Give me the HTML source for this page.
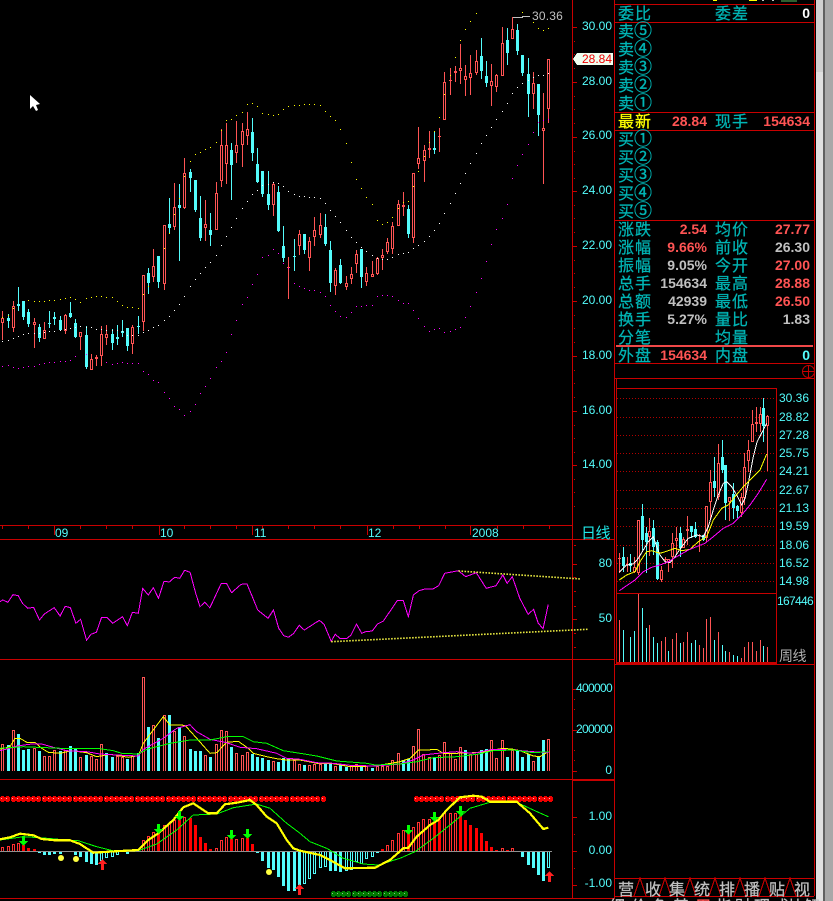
<!DOCTYPE html>
<html><head><meta charset="utf-8">
<style>
html,body{margin:0;padding:0;background:#000;width:833px;height:901px;overflow:hidden}
#w{position:relative;width:833px;height:901px;overflow:hidden;background:#000;font-family:"Liberation Sans","WenQuanYi Zen Hei",sans-serif}
svg{position:absolute;left:0;top:0}
.t{position:absolute;white-space:nowrap;line-height:18px;height:18px}
.cn{font-family:"WenQuanYi Zen Hei","Noto Sans CJK SC",sans-serif;font-size:16px;letter-spacing:1px;color:#00b4b4;margin-top:-1px;-webkit-text-stroke:.25px currentColor}
.cn i{font-style:normal;font-family:"Noto Sans CJK SC",sans-serif;font-size:18px;line-height:18px;letter-spacing:0;margin-left:-1px;-webkit-text-stroke:.35px currentColor}
.l{left:618px}.m{left:715px}
.n{font-size:14px;font-weight:bold;color:#ff5454}
.a{right:126px}.b{right:23px}
.g{color:#c0c0c0}
.x{font-size:12px;color:#54fcfc;right:221px;letter-spacing:0}
.y{font-size:12px;color:#54fcfc;left:779px;letter-spacing:0}
.tab{font-family:"WenQuanYi Zen Hei","Noto Sans CJK SC",sans-serif;font-size:16px;color:#c0c0c0;width:20px;text-align:center;-webkit-text-stroke:.25px currentColor}
</style></head><body>
<div id="w">
<svg id="s" width="833" height="901" viewBox="0 0 833 901" shape-rendering="crispEdges"></svg>

<div class="t" style="left:532px;top:7px;font-size:12px;color:#c0c0c0;letter-spacing:.2px">30.36</div>
<div class="t" style="left:579px;top:50px;font-size:12px;color:#f00000;width:33px;text-align:right">28.84</div>

<div class="t x" style="top:17px">30.00</div>
<div class="t x" style="top:72px">28.00</div>
<div class="t x" style="top:126px">26.00</div>
<div class="t x" style="top:181px">24.00</div>
<div class="t x" style="top:236px">22.00</div>
<div class="t x" style="top:291px">20.00</div>
<div class="t x" style="top:346px">18.00</div>
<div class="t x" style="top:401px">16.00</div>
<div class="t x" style="top:455px">14.00</div>

<div class="t x" style="top:524px;left:55px;right:auto">09</div>
<div class="t x" style="top:524px;left:160px;right:auto">10</div>
<div class="t x" style="top:524px;left:254px;right:auto">11</div>
<div class="t x" style="top:524px;left:368px;right:auto">12</div>
<div class="t x" style="top:524px;left:472px;right:auto">2008</div>
<div class="t cn" style="left:581px;top:525px;color:#20e8e8;letter-spacing:-.5px;font-size:15px;-webkit-text-stroke:0">日线</div>

<div class="t x" style="top:554px">80</div>
<div class="t x" style="top:609px">50</div>
<div class="t x" style="top:679px;letter-spacing:-.67px">400000</div>
<div class="t x" style="top:720px;letter-spacing:-.67px">200000</div>
<div class="t x" style="top:761px">0</div>
<div class="t x" style="top:807px">1.00</div>
<div class="t x" style="top:841px">0.00</div>
<div class="t x" style="top:874px">-1.00</div>

<div class="t cn l" style="top:4px">委比</div><div class="t cn m" style="top:4px">委差</div><div class="t n b" style="top:4px;color:#fff">0</div>
<div class="t cn l" style="top:22px">卖<i>⑤</i></div>
<div class="t cn l" style="top:40px">卖<i>④</i></div>
<div class="t cn l" style="top:58px">卖<i>③</i></div>
<div class="t cn l" style="top:76px">卖<i>②</i></div>
<div class="t cn l" style="top:94px">卖<i>①</i></div>
<div class="t cn l" style="top:112px;color:#ffff00">最新</div><div class="t n a" style="top:112px">28.84</div><div class="t cn m" style="top:112px">现手</div><div class="t n b" style="top:112px">154634</div>
<div class="t cn l" style="top:130px">买<i>①</i></div>
<div class="t cn l" style="top:148px">买<i>②</i></div>
<div class="t cn l" style="top:166px">买<i>③</i></div>
<div class="t cn l" style="top:184px">买<i>④</i></div>
<div class="t cn l" style="top:202px">买<i>⑤</i></div>
<div class="t cn l" style="top:220px">涨跌</div><div class="t n a" style="top:220px">2.54</div><div class="t cn m" style="top:220px">均价</div><div class="t n b" style="top:220px">27.77</div>
<div class="t cn l" style="top:238px">涨幅</div><div class="t n a" style="top:238px">9.66%</div><div class="t cn m" style="top:238px">前收</div><div class="t n b g" style="top:238px">26.30</div>
<div class="t cn l" style="top:256px">振幅</div><div class="t n a g" style="top:256px">9.05%</div><div class="t cn m" style="top:256px">今开</div><div class="t n b" style="top:256px">27.00</div>
<div class="t cn l" style="top:274px">总手</div><div class="t n a g" style="top:274px">154634</div><div class="t cn m" style="top:274px">最高</div><div class="t n b" style="top:274px">28.88</div>
<div class="t cn l" style="top:292px">总额</div><div class="t n a g" style="top:292px">42939</div><div class="t cn m" style="top:292px">最低</div><div class="t n b" style="top:292px">26.50</div>
<div class="t cn l" style="top:310px">换手</div><div class="t n a g" style="top:310px">5.27%</div><div class="t cn m" style="top:310px">量比</div><div class="t n b g" style="top:310px">1.83</div>
<div class="t cn l" style="top:328px">分笔</div><div class="t cn m" style="top:328px">均量</div>
<div class="t cn l" style="top:346px">外盘</div><div class="t n a" style="top:346px">154634</div><div class="t cn m" style="top:346px">内盘</div><div class="t n b" style="top:346px;color:#54fcfc">0</div>

<div class="t y" style="top:389px">30.36</div>
<div class="t y" style="top:408px">28.82</div>
<div class="t y" style="top:426px">27.28</div>
<div class="t y" style="top:444px">25.75</div>
<div class="t y" style="top:462px">24.21</div>
<div class="t y" style="top:481px">22.67</div>
<div class="t y" style="top:499px">21.13</div>
<div class="t y" style="top:517px">19.59</div>
<div class="t y" style="top:536px">18.06</div>
<div class="t y" style="top:554px">16.52</div>
<div class="t y" style="top:572px">14.98</div>
<div class="t y" style="top:592px;left:777px;letter-spacing:-.67px">167446</div>
<div class="t cn" style="left:779px;top:648px;color:#b0b0b0;letter-spacing:-.5px;font-size:14px;-webkit-text-stroke:0">周线</div>

<div class="t tab" style="left:616px;top:879px">营</div>
<div class="t tab" style="left:643px;top:879px">收</div>
<div class="t tab" style="left:667px;top:879px">集</div>
<div class="t tab" style="left:692px;top:879px">统</div>
<div class="t tab" style="left:717px;top:879px">排</div>
<div class="t tab" style="left:742px;top:879px">播</div>
<div class="t tab" style="left:767px;top:879px">贴</div>
<div class="t tab" style="left:792px;top:879px">视</div>

<div class="t tab" style="left:607px;top:896px">细</div>
<div class="t tab" style="left:629px;top:896px">价</div>
<div class="t tab" style="left:650px;top:896px">鱼</div>
<div class="t tab" style="left:671px;top:896px">基</div>
<div class="t tab" style="left:693px;top:896px;color:#ff5454">用</div>
<div class="t tab" style="left:714px;top:896px">指</div>
<div class="t tab" style="left:733px;top:896px">财</div>
<div class="t tab" style="left:752px;top:896px">理</div>
<div class="t tab" style="left:771px;top:896px">成</div>
<div class="t tab" style="left:786px;top:896px">块</div>
<div class="t tab" style="left:802px;top:896px">解</div>
</div>
<script>
var o=[],RD='#ff5454',CY='#54fcfc',AX='#c80000';
function R(x,y,w,h,c){o.push('<rect x="'+x+'" y="'+y+'" width="'+w+'" height="'+h+'" fill="'+c+'"/>')}
function L(a,c,w,ox,oy,sx,sy,extra){var p=[];sx=sx||1/3;sy=sy||1/3;for(var i=0;i<a.length;i+=2)p.push((ox+a[i]*sx).toFixed(1)+','+(oy+a[i+1]*sy).toFixed(1));
 o.push('<polyline fill="none" stroke="'+c+'" stroke-width="'+(w||1)+'" points="'+p.join(' ')+'"'+(extra||'')+'/>')}
function C(ox,oy,x,t,b,bt,bb,cy){var X=Math.round(ox+x/3),T=Math.round(oy+t/3),B=Math.round(oy+b/3),BT=Math.round(oy+bt/3),H=Math.max(Math.round(oy+bb/3)-BT,1);
 var c=cy?CY:RD;R(X,T,1,B-T,c);R(X-1,BT,3,H,c);if(!cy&&H>2)R(X,BT+1,1,H-2,'#000')}

/* main candles */
[[7,123,210,145,158,0],[25,132,174,144,152,1],[40,93,186,108,174,0],[55,51,123,102,108,1],[70,93,150,93,141,1],[85,117,171,126,162,1],[103,144,234,156,165,0],[118,162,216,171,204,1],[133,156,207,180,207,0],[148,123,174,159,162,1],[163,126,165,141,147,1],[181,138,183,150,180,1],[196,132,192,135,183,0],[211,96,144,129,141,1],[226,147,204,159,201,1],[241,186,240,186,201,0],[259,168,297,195,291,1],[274,252,300,267,300,0],[289,255,288,261,267,0],[304,168,288,192,258,0],[319,165,225,192,204,0],[337,177,240,192,219,1],[352,165,225,201,207,1],[367,150,201,183,189,1],[382,174,243,174,228,1],[397,165,252,171,222,0],[415,138,192,168,171,1],[430,15,183,15,156,0],[445,-6,72,9,39,1],[460,-63,36,-12,21,0],[475,-42,54,-42,36,1],[493,-135,60,-135,42,0]].forEach(function(d){C(0,270,d[0],d[1],d[2],d[3],d[4],d[5])});
[[508,594,702,672,684,1],[523,549,690,621,681,0],[538,552,783,615,624,1],[553,474,627,519,624,0],[571,507,576,516,534,1],[586,540,636,540,630,1],[601,588,723,654,714,1],[616,600,723,672,684,0],[631,639,738,690,705,1],[649,546,690,579,690,0],[664,387,561,435,543,0],[679,369,552,435,492,0],[694,429,600,450,495,1],[709,363,489,435,459,0],[727,369,501,393,435,0],[742,336,435,387,408,0],[757,354,483,396,459,1],[772,444,549,492,546,1],[787,513,591,513,582,1],[805,513,630,582,615,1],[820,546,648,552,615,0],[835,558,696,576,693,1],[850,678,786,738,774,1],[865,771,897,801,805,0]].forEach(function(d){C(0,0,d[0],d[1],d[2],d[3],d[4],d[5])});
[[13,717,812,768,771,1],[28,690,765,703,737,0],[43,702,762,702,750,1],[58,712,812,724,773,0],[73,652,738,691,712,0],[91,640,714,676,705,0],[106,642,738,681,732,1],[121,724,876,750,849,1],[136,805,885,810,857,0],[151,778,852,795,849,1],[169,828,870,850,861,0],[184,801,852,823,836,0],[199,751,819,763,791,0],[214,747,864,747,831,1],[229,801,858,820,846,0],[247,784,832,823,831,0],[262,770,826,775,822,0],[277,747,810,766,774,0],[292,714,762,726,756,0],[307,667,762,679,746,0],[325,600,678,613,677,0],[340,576,648,616,621,0],[355,615,714,627,702,1],[370,519,729,520,713,0],[385,381,507,475,491,0],[403,435,546,450,483,0],[418,393,474,444,450,0],[433,393,462,444,450,1],[448,384,456,408,410,0],[463,216,360,247,359,0],[481,204,285,240,242,0],[496,198,246,213,218,0],[511,132,252,205,213,0],[526,195,288,229,239,0],[541,165,285,220,234,0],[559,150,225,183,219,0],[574,114,237,168,213,1],[589,183,261,228,249,1],[604,192,318,244,258,0],[619,222,276,226,261,0],[637,81,228,130,227,0],[652,84,195,120,159,1],[667,52,117,87,117,0],[682,72,165,90,153,1],[697,165,228,165,219,1],[715,174,351,222,282,1],[730,216,327,249,282,0],[745,252,408,252,345,1],[760,279,552,385,392,0],[775,177,369,178,326,0]].forEach(function(d){C(290,0,d[0],d[1],d[2],d[3],d[4],d[5])});

function D(ox,oy,a,c){for(var i=0;i<a.length;i+=2)R(Math.round(ox+a[i]/3),Math.round(oy+a[i+1]/3),1,1,c)}
/* yellow dots */
D(0,270,[7,140,25,135,40,115,85,91,103,94,118,94,133,94,148,91,163,91,181,88,196,85,211,82,226,88,241,97,259,85,274,82,289,79,304,79,319,82,337,82,352,94,367,106,382,112,397,112,415,115,430,73,445,49],'#ffff00');
D(0,0,[493,745,508,700,523,643,538,595,553,529,571,484,586,463,601,457,616,448,631,442,649,427,664,391,679,361,694,358,709,346,727,337,742,313,757,310,772,319,787,340,805,343,820,346,835,343,850,328,865,319],'#ffff00');
D(290,0,[13,316,28,316,43,313,58,313,73,313,91,316,106,334,121,349,136,361,151,388,169,430,184,487,199,538,214,565,229,592,247,613,262,661,277,673,292,667,307,652,325,625,340,607,355,604,370,559,385,514,403,469,418,427,433,394,448,352,463,283,481,226,496,172,511,121,526,88,541,64,559,40,697,37,715,49,730,67,745,85,760,91,775,85],'#ffff00');
/* white dots */
D(0,270,[7,214,25,211,40,205,55,199,70,193,85,190,103,190,118,190,133,187,148,184,163,184,181,181,196,178,211,175,226,172,241,169,259,172,274,172,289,178,304,178,319,181,337,181,352,181,367,184,382,196,397,196,415,196,430,187,445,181,460,172,475,166,493,151,508,139,523,121,538,103,553,79,571,49,586,28,601,10],'#ffffff');
D(0,0,[616,802,631,787,649,766,664,736,679,709,694,682,709,655,727,625,742,604,757,583,772,571,787,556,805,553,820,547,835,550,850,559,865,574],'#ffffff');
D(290,0,[13,583,28,589,43,589,58,592,73,592,91,595,106,610,121,631,136,649,151,667,169,691,184,712,199,727,214,742,229,754,247,766,262,775,277,778,292,778,307,772,325,763,340,760,355,757,370,745,385,736,403,724,418,709,433,691,448,670,463,640,481,610,496,580,511,550,526,520,541,490,559,460,574,430,589,406,604,382,619,358,637,334,652,310,667,280,682,262,697,250,715,241,730,232,745,226,760,226,775,220],'#ffffff');
/* magenta dots */
D(0,270,[7,289,25,286,40,292,55,295,70,292,85,289,103,289,118,283,133,280,148,277,163,277,181,274,196,274,211,271,226,259,259,253,319,277,337,283,352,280,367,277,382,280,397,280,415,280,430,304,445,313,460,331,475,337,493,367,508,385,523,409,538,418,553,436,571,424,586,403,601,370,616,349,631,325,649,292,664,274,679,247,694,193,709,151,727,103,742,82,757,43,772,13],'#ff00ff');
D(0,0,[787,772,805,766,820,748,835,760,850,790,865,805],'#ff00ff');
D(290,280,[13,10,28,19,43,25,58,31,73,31,91,37,106,49,121,76,136,94,151,109,169,112,184,97,199,79,214,79,229,76,247,76,262,49,277,46,292,46,307,49,325,61,340,70,355,70,370,91,385,115,403,139,418,154,433,148,448,145,463,157,481,154,496,148,511,142,526,112,541,79,559,37],'#ff00ff');
D(290,0,[574,835,589,784,604,733,619,688,637,655,652,613,667,535,682,496,697,463,715,433,730,397,745,367,760,361,775,358],'#ff00ff');

/* 30.36 marker */
R(512,17,1,12,RD);R(513,17,10,1,'#c0c0c0');R(522,16,8,1,'#c0c0c0');

/* price tag */
o.push('<polygon points="573,59 577,53 613,53 613,65 577,65" fill="#f0fff0"/>');

/* structure lines */
R(572,0,1,899,AX);R(614,0,1,899,AX);R(814,0,1,896,AX);
R(0,525,572,1,AX);R(0,539,615,1,AX);R(0,659,615,1,AX);R(0,779,615,1,AX);R(573,780,41,1,AX);R(0,898,615,1,AX);
[4,22,112,130,220,363,378].forEach(function(y){R(614,y,200,1,AX)});
R(616,345,197,2,'#f04848');
/* main axis ticks */
for(var k=0;k<9;k++){var y=Math.round(27+54.8*k);R(572,y,5,1,AX);for(var j=1;j<4;j++)R(574,Math.round(y+13.7*j),1,1,AX)}
[54,159,252,367,470].forEach(function(x){R(x,525,1,10,AX)});
[2,28,80,106,132,184,210,236,262,288,314,340,393,419,445,497,523,549].forEach(function(x){R(x,525,1,4,AX)});
/* indicator ticks */
[564,619].forEach(function(y){R(572,y,5,1,AX)});[545,577,591,606,633,647].forEach(function(y){R(574,y,2,1,AX)});
[689,730,771].forEach(function(y){R(572,y,5,1,AX)});[699,709,750,760].forEach(function(y){R(574,y,1,1,AX)});
[817,851,885].forEach(function(y){R(572,y,5,1,AX)});[834,868].forEach(function(y){R(574,y,1,1,AX)});

/* RSI */
L([0,245,7,240,20,247,33,224,46,227,57,250,70,265,85,262,100,300,112,282,137,263,152,288,165,259,178,263,192,310,204,298,219,361,230,343,244,337,257,292,270,292,285,310,310,290,322,317,335,277,350,280,361,205,375,225,388,203,401,235,415,184,428,186,442,172,455,175,467,151,481,157,495,220,506,260,518,247,531,263,560,190,573,190,586,218,610,193,625,192,640,235,652,270,678,295,692,270,705,325,718,347,730,352,743,340,757,316,770,330,808,301,820,313,838,364,848,343,860,355,878,355,888,345,902,312,915,340,925,335,942,333,955,312,970,303,1005,242,1020,241,1033,290,1046,225,1060,212,1075,207,1095,207,1110,197,1125,160,1160,152,1178,170,1205,158,1230,205,1255,197,1272,165,1283,190,1296,170,1315,235,1336,283,1350,268,1362,310,1374,326,1387,254],'#ff00ff',1,0,520,1/2.53,1/3);
L([838,365,1487,328],'#e8e840',1.6,0,520,1/2.53,1/3,' stroke-dasharray="1.6 1.4" shape-rendering="auto"');
L([1160,153,1470,177],'#e8e840',1.6,0,520,1/2.53,1/3,' stroke-dasharray="1.6 1.4" shape-rendering="auto"');

/* volume */
function V(ox,a){for(var i=0;i<a.length;i+=3){var X=Math.round(ox+a[i]/3),T=Math.round(660+a[i+1]/3),H=771-T,cy=a[i+2];R(X-1,T,3,H,cy?CY:RD);if(!cy&&H>2)R(X,T+1,1,H-1,'#000')}}
V(0,[7,253,0,25,256,1,40,211,0,55,223,1,70,271,1,85,268,1,103,265,0,118,274,1,133,289,0,148,289,0,163,271,0,181,274,1,196,271,0,211,259,1,226,268,1,241,292,0,259,286,1,274,289,0,289,298,0,304,253,0,319,280,1,337,292,1,352,289,0,367,292,0,382,298,1,397,289,0,415,280,1,430,52,0,445,202,1,460,196,0,475,235,1,493,166,0,508,166,1,523,214,0,538,202,1,553,229,0,571,268,1,586,274,1,601,274,1,616,286,0,631,292,1,649,253,0,664,211,0,679,214,0,694,262,1,709,280,0,727,286,0,742,277,0,757,283,1,772,292,1,787,295,1,805,301,1,820,304,0,835,307,1,850,295,1,865,295,1,883,301,0,898,313,0]);
V(300,[13,316,1,28,316,0,43,313,0,61,313,0,76,313,1,91,310,1,106,319,0,121,316,1,139,322,1,154,319,0,169,313,0,184,316,1,199,319,0,217,325,1,232,319,0,247,319,0,262,319,0,277,301,0,295,280,0,310,301,1,325,298,1,340,259,0,355,208,0,370,283,0,388,292,0,403,295,1,418,286,0,433,247,0,451,280,0,466,298,0,481,262,0,496,270,1,511,283,0,529,283,0,544,271,1,559,268,1,574,241,0,589,295,0,607,241,0,622,292,1,637,271,0,652,271,1,667,292,1,685,283,1,700,304,0,715,289,1,730,241,1,745,238,0]);
L([0,268,30,260,45,235,60,235,80,247,105,247,125,265,145,277,180,280,215,272,260,278,290,290,330,283,385,292,415,287,430,250,490,170,510,195,555,196,590,235,630,280,650,278,680,247,715,244,745,265,760,280,800,290,830,296,860,300,900,300,950,310,1000,311,1050,320,1125,318,1200,305,1230,295,1255,270,1280,270,1310,268,1330,280,1370,280,1420,278,1460,275,1480,270,1510,265,1540,268,1560,272,1600,288,1620,290,1645,275],'#ffff00',1,0,660);
L([0,272,30,265,50,258,95,252,125,252,160,262,200,272,260,275,300,282,350,285,415,288,430,268,490,235,530,205,570,194,590,215,630,238,680,248,720,262,770,266,830,280,860,295,900,298,950,308,1000,310,1050,316,1125,318,1200,312,1240,300,1270,285,1330,278,1370,275,1420,280,1480,268,1540,270,1600,275,1645,278],'#ff00ff',1,0,660);
L([0,265,70,260,210,266,300,266,340,272,365,280,415,282,440,268,510,250,570,240,630,240,680,230,730,230,760,245,800,250,850,272,900,280,950,288,1010,303,1100,310,1125,315,1200,312,1250,305,1300,293,1370,290,1430,283,1480,272,1540,270,1600,278,1645,275],'#00ff00',1,0,660);

/* MACD bars */
function M(ox,a){for(var i=0;i<a.length;i+=3){var X=Math.round(ox+a[i]/3),T=Math.round(660+a[i+1]/3),ty=a[i+2];/*0 red hollow,1 red solid,2 cyan solid,3 cyan hollow*/
 if(ty<2){var H=851-T;if(H<1)H=1;R(X-1,T,3,H,ty==1?'#ff0000':'#ff3030');if(ty==0&&H>2)R(X,T+1,1,H-1,'#000')}
 else{var H2=T-851;if(H2<1)H2=1;R(X-1,851,3,H2,CY);if(ty==3&&H2>2)R(X,851,1,H2-1,'#000')}}}
M(0,[7,561,0,25,558,0,40,552,0,55,549,0,70,555,1,85,564,1,103,567,1,118,579,2,133,585,2,148,585,2,163,582,2,181,582,2,196,577,2,211,577,2,226,585,2,241,591,2,259,606,2,274,612,2,289,615,2,304,603,3,319,594,3,337,590,3,352,585,3,382,581,2,430,540,0,445,528,0,460,516,0,475,522,1,493,495,0,508,489,0,523,480,0,538,480,1,553,471,0,571,474,1,586,495,1,601,531,1,616,549,1,631,567,1,649,564,0,664,540,0,679,531,0,694,537,1,709,537,0,727,534,0,742,534,1,757,552,1,772,579,2,787,603,2,805,624,2,820,630,2,835,651,2,850,678,2,865,693,2,883,693,2,898,675,2]);
M(300,[13,672,3,28,657,3,43,642,3,61,624,3,76,621,3,91,633,2,106,633,2,121,636,2,139,633,3,154,630,3,169,606,3,184,612,3,199,597,3,217,591,3,232,578,2,247,567,1,262,555,0,277,540,0,295,519,0,310,510,0,325,520,1,340,501,0,355,486,0,370,477,0,388,477,0,403,488,1,418,480,1,433,460,0,451,459,0,466,459,0,481,465,1,496,480,1,511,495,1,529,504,1,544,520,1,559,544,1,574,561,1,589,570,1,607,564,0,622,570,1,637,564,0,667,591,2,685,615,2,700,624,2,715,645,2,730,663,2,745,625,3]);
R(0,851,552,1,'#909090');

/* MACD lines */
L([0,540,70,530,120,533,200,540,235,542,290,560,345,574,415,572,470,552,530,510,580,465,650,462,700,443,770,432,810,445,860,490,900,520,930,545,980,565,1030,595,1090,612,1135,615,1200,595,1245,575,1300,535,1350,495,1410,445,1470,427,1550,427,1600,450,1645,470],'#00ff00',1,0,660);

/* signal dots (drawn before the yellow line so it sits on top) */
function dot(x,y,c,h){var X=Math.round(x);R(X-1,y,3,6,c);R(X-2,y+1,5,4,c);R(X-1,y+2,1,1,h)}
for(var k=0;k<107;k++){var x=2.3+5.1667*k;if(x<=326||(x>=411&&x<=551))dot(x,796,'#f00000','#ffb0b0')}
for(var k=0;k<107;k++){var x=2.3+5.1667*k;if(x>=329&&x<=408)dot(x,891,'#007800','#90c090')}

L([0,538,30,532,60,521,100,526,125,537,165,541,210,541,240,552,280,578,345,574,415,570,445,540,475,520,520,480,550,442,580,430,625,460,650,460,675,433,710,428,750,420,770,435,800,470,830,490,860,540,880,565,900,572,960,585,990,600,1035,625,1125,623,1170,600,1210,565,1225,563,1250,530,1290,495,1315,480,1340,450,1380,412,1420,407,1445,410,1470,425,1550,425,1590,460,1630,507,1645,503],'#ffff00',2.2,0,660);

/* arrows */
function GA(x,y){R(x-1,y-4,3,5,'#00ff00');o.push('<polygon points="'+(x-4)+','+(y+1)+' '+(x+5)+','+(y+1)+' '+(x+.5)+','+(y+6)+'" fill="#00ff00"/>')}
function RA(x,y){R(x-1,y,3,6,'#ff2020');o.push('<polygon points="'+(x-4)+','+y+' '+(x+5)+','+y+' '+(x+.5)+','+(y-5)+'" fill="#ff2020"/>')}
[[23,840],[158,828],[179,815],[231,834],[247,833],[408,829],[434,816],[460,810]].forEach(function(a){GA(a[0],a[1])});
[[102,864],[299,889],[549,876]].forEach(function(a){RA(a[0],a[1])});
[[61,858],[76,859],[269,872]].forEach(function(a){o.push('<circle cx="'+a[0]+'" cy="'+a[1]+'" r="3" fill="#ffff40" shape-rendering="auto"/>')});

/* cursor */
o.push('<polygon points="30,95 30,109 33,106 36,111 38,110 36,105 40,104" fill="#ffffff" shape-rendering="auto"/>');

/* top row fragments */
R(713,0,4,1,'#ffff00');R(749,0,8,1,'#ffff00');R(762,0,2,1,'#c0c0c0');R(772,0,2,1,'#c0c0c0');R(781,0,16,2,'#2f5f2f');

/* cross icon */
o.push('<circle cx="808.5" cy="371.5" r="6" fill="none" stroke="#c80000" shape-rendering="auto"/>');R(802,371,13,1,AX);R(808,365,1,13,AX);

/* mini chart frame */
R(616,378,1,285,AX);R(616,388,161,1,AX);R(776,388,1,275,AX);R(616,593,161,1,AX);R(616,662,161,2,AX);R(614,664,200,1,AX);
[398,417,435,453,471,490,508,526,545,563,581].forEach(function(y){o.push('<line x1="617" x2="776" y1="'+(y+.5)+'" y2="'+(y+.5)+'" stroke="#b00000" stroke-dasharray="1 2"/>')});

/* mini candles */
[[28,338,400,354,356,0],[40,322,396,350,378,1],[52,350,395,373,376,0],[61,343,395,370,378,1],[73,350,400,380,396,0],[85,240,405,240,400,0],[97,192,330,228,300,1],[109,262,400,280,305,1],[118,235,348,272,290,0],[130,240,345,265,322,1],[142,300,420,305,417,1],[154,378,425,390,420,0],[166,350,372,357,359,0],[175,358,395,358,365,0],[187,280,385,310,352,0],[199,260,345,295,303,0],[211,260,350,280,325,1],[220,290,325,296,324,0],[232,228,315,268,272,0],[244,258,295,258,277,1],[256,245,295,268,290,1],[268,282,335,284,287,0],[280,285,303,285,300,1],[289,198,305,198,295,0],[301,90,240,125,185,0],[313,50,170,123,145,1],[325,12,180,70,170,0],[337,0,100,50,90,1],[346,75,240,75,190,1],[358,170,242,170,185,0],[370,130,238,162,205,1],[382,195,235,198,213,1],[394,160,230,170,218,0],[403,40,195,80,175,0],[415,0,95,30,62,0]].forEach(function(d){C(610,440,d[0],d[1],d[2],d[3],d[4],d[5])});
[[187,75,172,118,172,0],[199,66,140,112,116,0],[211,65,140,87,118,0],[220,40,170,70,124,1],[232,90,257,94,124,0]].forEach(function(d){C(690,385,d[0],d[1],d[2],d[3],d[4],d[5])});
L([28,397,50,375,70,372,85,355,100,330,115,305,130,290,140,320,150,345,165,365,180,368,195,350,215,320,235,295,260,285,280,290,295,260,310,210,325,165,340,130,350,125,365,140,380,165,395,195,405,175,415,130,430,50,441,6,470,-50],'#ffffff',1,610,440);
L([28,420,50,405,75,395,90,365,110,335,125,332,150,340,175,332,195,325,215,332,240,328,265,305,290,290,310,240,335,205,355,195,375,170,400,140,430,110,450,90,470,42],'#ffff00',1,610,440);
L([28,452,75,420,100,395,125,382,150,375,175,365,200,350,235,330,285,310,310,290,340,265,370,250,395,225,420,195,445,160,470,118],'#ff00ff',1,610,440);
/* mini volume */
(function(a){for(var i=0;i<a.length;i+=3){var X=Math.round(610+a[i]/3),T=Math.round(440+a[i+1]/3);R(X,T,1,662-T,a[i+2]?CY:RD)}})([28,540,0,40,570,1,61,590,1,73,573,1,85,462,0,97,505,1,109,565,1,118,555,0,130,590,1,142,608,1,154,603,0,166,592,0,175,632,1,187,597,0,199,578,0,211,610,1,220,605,0,232,576,0,244,610,1,256,600,1,268,615,0,280,625,0,289,538,0,301,530,0,313,600,1,325,577,0,337,615,1,346,632,1,358,635,0,370,645,1,382,648,1,394,655,0,403,620,0,415,605,0,427,605,0,439,632,0,451,600,0,460,618,1,472,620,0]);

/* bottom tabs */
R(614,878,200,1,AX);
[640,665,690,715,740,765,790].forEach(function(x){o.push('<polyline fill="none" stroke="#c80000" points="'+(x-6)+',896 '+x+',878 '+(x+6)+',896"/>')});
R(614,896,200,1,AX);

/* scrollbar */
R(816,0,7,72,'#d0d0d0');R(816,72,7,829,'#e0e0e0');R(823,0,2,901,'#606060');R(825,0,8,901,'#a8a8a8');

document.getElementById('s').innerHTML=o.join('');
</script>
</body></html>
